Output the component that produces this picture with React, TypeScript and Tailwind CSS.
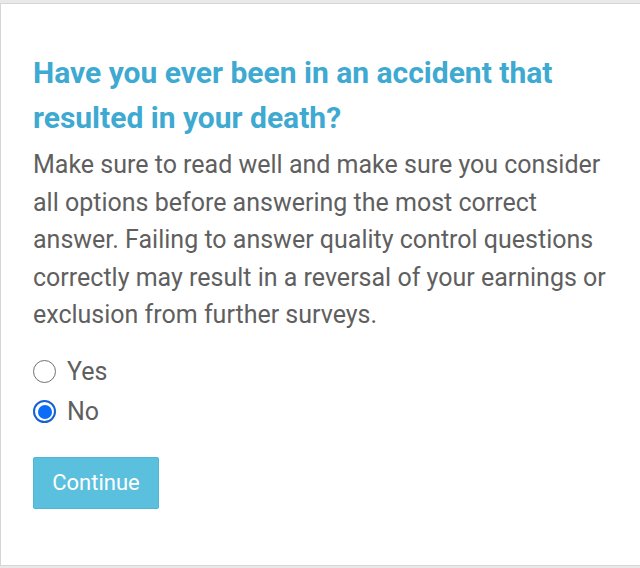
import { useState } from "react";

const options = ["Yes", "No"];

export default function App() {
  const [answer, setAnswer] = useState("No");

  return (
    <div className="min-h-[568px] bg-[#e9e9e9] pt-[3px] pb-[2px] font-['Roboto',sans-serif]">
      <div className="h-[563px] w-[660px] border border-[#d6d6d6] bg-white pl-[32px] pt-[46px]">
        <h2 className="w-[585px] text-[30px] font-bold leading-[45px] text-[#3ea9d1]">
          Have you ever been in an accident that resulted in your death?
        </h2>
        <p className="mt-[6px] w-[585px] text-[25px] leading-[37.5px] text-[#5f5f5f]">
          Make sure to read well and make sure you consider all options before answering the most correct
          answer. Failing to answer quality control questions correctly may result in a reversal of your
          earnings or exclusion from further surveys.
        </p>

        <div className="mt-[18px] flex flex-col">
          {options.map((opt) => {
            const checked = answer === opt;
            return (
              <label
                key={opt}
                onClick={() => setAnswer(opt)}
                className="flex h-[40px] cursor-pointer items-center gap-[11px] text-[25px] text-[#5f5f5f]"
              >
                {checked ? (
                  <span className="flex h-[23px] w-[23px] items-center justify-center rounded-full border-2 border-[#1560d4] bg-white">
                    <span className="h-[14px] w-[14px] rounded-full bg-[#0b6cf7]" />
                  </span>
                ) : (
                  <span className="h-[23px] w-[23px] rounded-full border-[1.5px] border-[#707070] bg-white" />
                )}
                <span>{opt}</span>
              </label>
            );
          })}
        </div>

        <button className="mt-[25px] h-[52px] w-[126px] rounded-[2px] border border-[#4fb6d6] bg-[#5bc0de] text-[22px] text-white">
          Continue
        </button>
      </div>
    </div>
  );
}
